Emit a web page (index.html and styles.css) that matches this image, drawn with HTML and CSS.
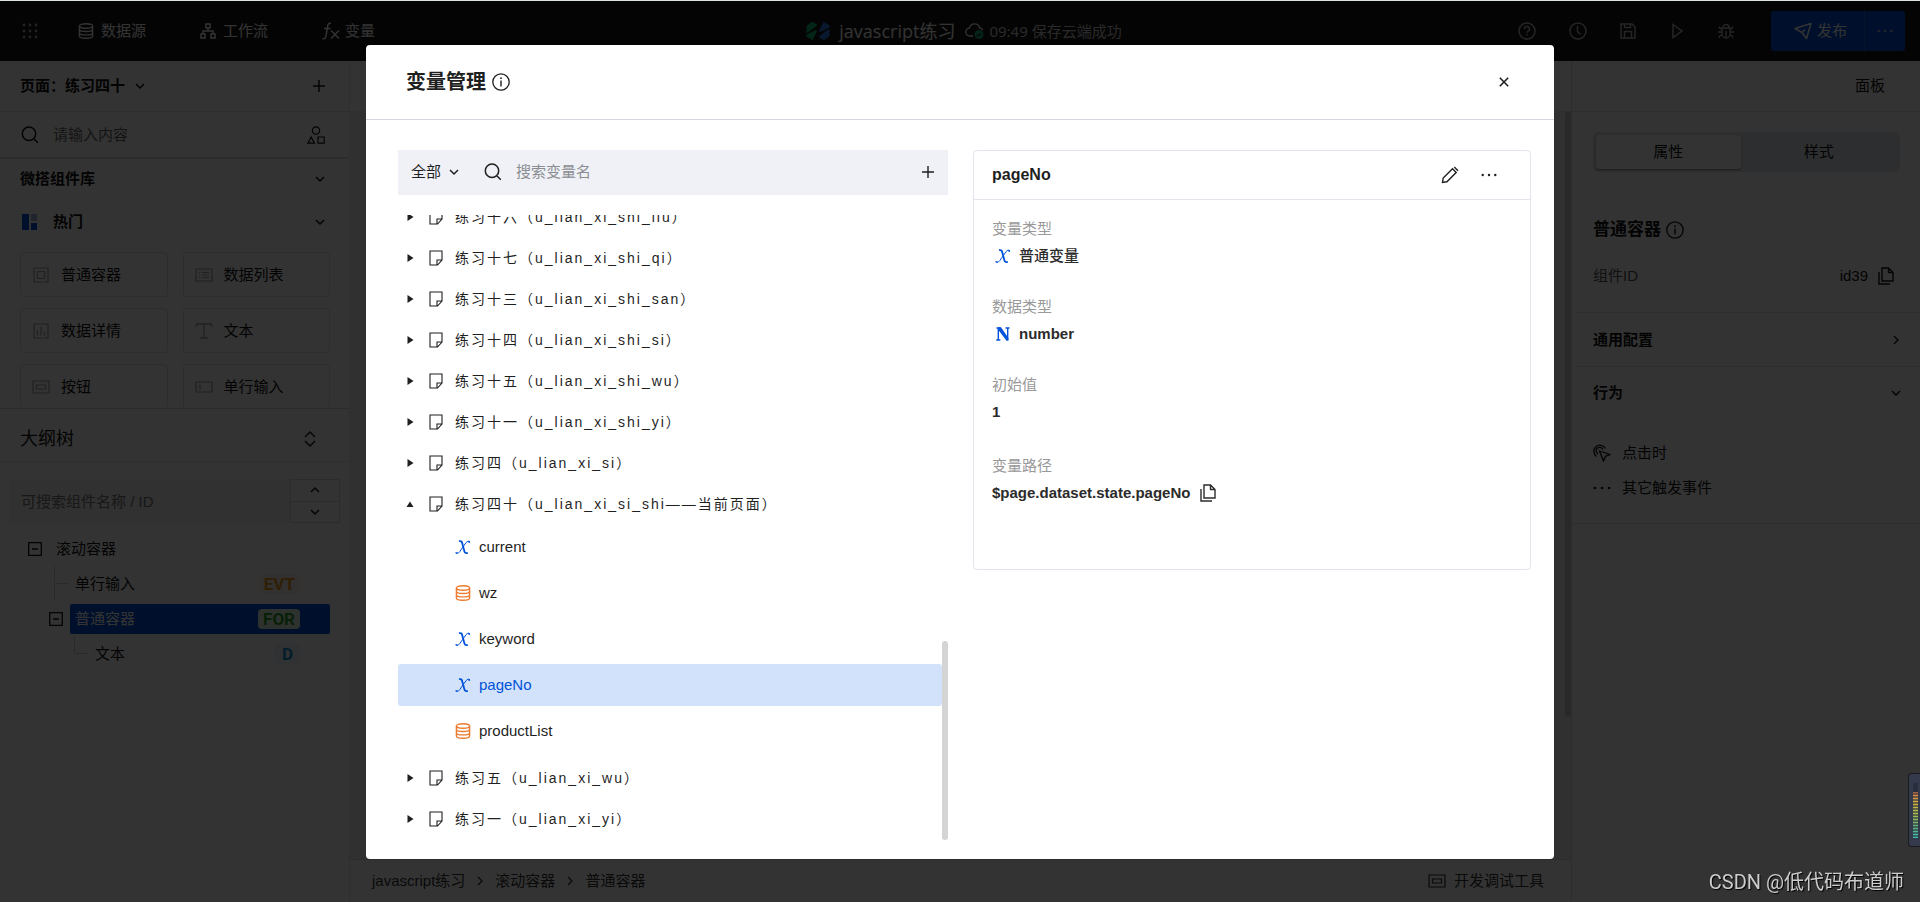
FILE: index.html
```html
<!DOCTYPE html>
<html lang="zh-CN">
<head>
<meta charset="utf-8">
<title>javascript练习 - 变量管理</title>
<link rel="stylesheet" href="styles.css">
</head>
<body>
<svg class="sprite" aria-hidden="true">
  <symbol id="i-grid" viewBox="0 0 16 16"><g fill="currentColor"><circle cx="2" cy="2" r="1.4"/><circle cx="8" cy="2" r="1.4"/><circle cx="14" cy="2" r="1.4"/><circle cx="2" cy="8" r="1.4"/><circle cx="8" cy="8" r="1.4"/><circle cx="14" cy="8" r="1.4"/><circle cx="2" cy="14" r="1.4"/><circle cx="8" cy="14" r="1.4"/><circle cx="14" cy="14" r="1.4"/></g></symbol>
  <symbol id="i-db" viewBox="0 0 16 16"><g fill="none" stroke="currentColor" stroke-width="1.4"><ellipse cx="8" cy="3" rx="6.6" ry="2.2"/><path d="M1.4 3v10c0 1.2 3 2.2 6.600 2.200s6.600-1 6.600-2.200V3M1.400 6.300c0 1.200 3 2.200 6.600 2.200s6.600-1 6.600-2.200M1.400 9.700c0 1.200 3 2.200 6.600 2.200s6.600-1 6.600-2.200"/></g></symbol>
  <symbol id="i-flow" viewBox="0 0 16 16"><g fill="none" stroke="currentColor" stroke-width="1.5"><path d="M6 1h4v4H6zM1 11h4v4H1zM11 11h4v4h-4zM8 5v3M3 11V8h10v3"/></g></symbol>
  <symbol id="i-fx" viewBox="0 0 18 18"><g fill="none" stroke="currentColor" stroke-width="1.5"><path d="M9 1.500C6.500.8 5.800 2.500 5.500 5L4 14c-.3 2-1.200 3.200-3.500 2.700M2 6.500h6.500M9 8.500l8 8M17 8.500l-8 8"/></g></symbol>
  <symbol id="i-help" viewBox="0 0 18 18"><g fill="none" stroke="currentColor" stroke-width="1.500"><circle cx="9" cy="9" r="8"/><path d="M6.500 7a2.500 2.500 0 1 1 3.600 2.200c-.8.400-1.100.8-1.100 1.600M9 12v1.500"/></g></symbol>
  <symbol id="i-clock" viewBox="0 0 18 18"><g fill="none" stroke="currentColor" stroke-width="1.500"><circle cx="9" cy="9" r="8"/><path d="M8.500 4v5.500l3 3"/></g></symbol>
  <symbol id="i-save" viewBox="0 0 16 16"><g fill="none" stroke="currentColor" stroke-width="1.500"><path d="M1 1h11l3 3v11H1zM4.500 1v3.500h6V1M4.500 15V8.500h7V15"/></g></symbol>
  <symbol id="i-play" viewBox="0 0 16 16"><path d="M4 1.500l9 6.500-9 6.500z" fill="none" stroke="currentColor" stroke-width="1.500"/></symbol>
  <symbol id="i-bug" viewBox="0 0 16 16"><g fill="none" stroke="currentColor" stroke-width="1.300"><path d="M5 4.500a3 3 0 0 1 6 0M4 5h8v6a4 4 0 0 1-8 0zM8 8v7M0 9h4M12 9h4M1 3.500c.3 1.500 1.200 2.500 3 2.500M15 3.500c-.3 1.500-1.200 2.500-3 2.500M1 15c.3-1.800 1.200-2.800 3-2.800M15 15c-.3-1.800-1.200-2.800-3-2.800"/></g></symbol>
  <symbol id="i-send" viewBox="0 0 18 18"><path d="M1 6.500L17 1.500 12.500 16.500 8 10.500zM8 10.500l3-3" fill="none" stroke="currentColor" stroke-width="1.500" stroke-linejoin="round"/></symbol>
  <symbol id="i-dots" viewBox="0 0 16 16"><g fill="currentColor"><circle cx="1.700" cy="8" r="1.200"/><circle cx="8" cy="8" r="1.200"/><circle cx="14.300" cy="8" r="1.200"/></g></symbol>
  <symbol id="i-down" viewBox="0 0 10 10"><path d="M1 3l4 4 4-4" fill="none" stroke="currentColor" stroke-width="1.500"/></symbol>
  <symbol id="i-up" viewBox="0 0 10 10"><path d="M1 7l4-4 4 4" fill="none" stroke="currentColor" stroke-width="1.500"/></symbol>
  <symbol id="i-right" viewBox="0 0 10 10"><path d="M3 1l4 4-4 4" fill="none" stroke="currentColor" stroke-width="1.300"/></symbol>
  <symbol id="i-updown" viewBox="0 0 12 16"><path d="M1 6l5-5 5 5M1 10l5 5 5-5" fill="none" stroke="currentColor" stroke-width="1.400"/></symbol>
  <symbol id="i-plus" viewBox="0 0 12 12"><path d="M6 0v12M0 6h12" fill="none" stroke="currentColor" stroke-width="1.400"/></symbol>
  <symbol id="i-search" viewBox="0 0 18 18"><path d="M8 1a6.700 6.700 0 1 0 0 13.400A6.700 6.700 0 0 0 8 1zM12.800 12.800l4 4" fill="none" stroke="currentColor" stroke-width="1.500"/></symbol>
  <symbol id="i-shapes" viewBox="0 0 18 18"><g fill="none" stroke="currentColor" stroke-width="1.200"><circle cx="9" cy="4.500" r="3.700"/><path d="M4.200 11L.9 17.200h6.600zM11 11h6.200v6.200H11z"/></g></symbol>
  <symbol id="i-box" viewBox="0 0 18 16"><path d="M2 1h14v14H2zM5.500 4.500h7v7h-7z" fill="none" stroke="currentColor" stroke-width="1.200"/></symbol>
  <symbol id="i-list" viewBox="0 0 18 16"><path d="M1 2h16v12H1zM4 5.500h1.500M7 5.500h7M4 8h1.500M7 8h7M4 10.500h1.500M7 10.500h7" fill="none" stroke="currentColor" stroke-width="1.200"/></symbol>
  <symbol id="i-chart" viewBox="0 0 18 16"><path d="M2 1h14v14H2zM5.500 7v5.500M9 4v8.500M12.500 9v3.500" fill="none" stroke="currentColor" stroke-width="1.200"/></symbol>
  <symbol id="i-t" viewBox="0 0 18 16"><path d="M1.500 4V1h15v3M9 1v14M5 15h8" fill="none" stroke="currentColor" stroke-width="1.300"/></symbol>
  <symbol id="i-btn" viewBox="0 0 18 16"><path d="M1 2h16v12H1zM4.500 6h9v4h-9z" fill="none" stroke="currentColor" stroke-width="1.200"/></symbol>
  <symbol id="i-input" viewBox="0 0 18 16"><path d="M1 3h16v10H1zM5 5.500v5" fill="none" stroke="currentColor" stroke-width="1.200"/></symbol>
  <symbol id="i-minus" viewBox="0 0 14 14"><path d="M.7.7h12.600v12.600H.7zM4 7h6" fill="none" stroke="currentColor" stroke-width="1.300"/></symbol>
  <symbol id="i-info" viewBox="0 0 18 18"><circle cx="9" cy="9" r="8.200" fill="none" stroke="currentColor" stroke-width="1.300"/><path d="M9 7.500v6" stroke="currentColor" stroke-width="1.400"/><circle cx="9" cy="5.200" r=".9" fill="currentColor"/></symbol>
  <symbol id="i-copy" viewBox="0 0 16 18"><g fill="none" stroke="currentColor" stroke-width="1.400"><path d="M4 1h6.500L15 5.500V14H4zM10.500 1v4.500H15"/><path d="M1 5v12h11"/></g></symbol>
  <symbol id="i-click" viewBox="0 0 18 18"><g fill="none" stroke="currentColor" stroke-width="1.300"><path d="M6.500 7l10.500 3.500-4.500 1.800-2 4.700zM3.500 12.500A6.200 6.200 0 1 1 12.500 4.500M5 10A3.500 3.500 0 1 1 9.800 5.500"/></g></symbol>
  <symbol id="i-close" viewBox="0 0 10 10"><path d="M.8.8l8.400 8.400M9.200.8L.8 9.200" stroke="currentColor" stroke-width="1.600"/></symbol>
  <symbol id="i-page" viewBox="0 0 14 16"><path d="M1 1h12v9l-4.500 5H1zM8 14.500V10h5" fill="none" stroke="currentColor" stroke-width="1.100"/></symbol>
  <symbol id="i-tri" viewBox="0 0 8 8"><path d="M1.500 0l6 4-6 4z" fill="currentColor"/></symbol>
  <symbol id="i-triup" viewBox="0 0 8 8"><path d="M.5 7h7L4 1.500z" fill="currentColor"/></symbol>
  <symbol id="i-x" viewBox="0 0 16 16"><g fill="none" stroke="currentColor"><path d="M4 2.200c2.500-.5 2.800.3 3.500 3l1.600 6c.5 2.300 1 3.300 3.700 2.700" stroke-width="1.800"/><path d="M14.800 3.300c-.5-1.700-2.300-1.500-3.700.3L4.700 12.700C3.300 14.700 1.600 14.700 1 13.500" stroke-width="1"/><path d="M13.400 2.900h1.600M.7 14h1.800" stroke-width="1.600"/></g></symbol>
  <symbol id="i-n" viewBox="0 0 16 16"><path d="M1.500 2h4M3.300 2v12M1.300 14h4M12.700 2v12M10.500 2h4" fill="none" stroke="currentColor" stroke-width="1.400"/><path d="M3 1.300h3L13.400 12v2.700h-1.800L3 3.500z" fill="currentColor"/></symbol>
  <symbol id="i-pencil" viewBox="0 0 18 18"><path d="M1.500 16.500l.7-4.500L11.500 2.700l3.700 3.700-9.300 9.400zM13.300 1l3.700 3.700" fill="none" stroke="currentColor" stroke-width="1.400"/></symbol>
  <symbol id="i-logo" viewBox="0 0 24 20"><path d="M.5 5L6 .8 11 3.500v1L4 10 .5 12zM.5 13.500L10 9l1 1-4.500 9.200L.5 15.500z" fill="#12b870"/><path d="M23.500 15L18 19.200 13 16.500v-1L20 10l3.500-2zM23.500 6.500L14 11l-1-1L17.500.8l6 3.700z" fill="#2c7be8"/></symbol>
  <symbol id="i-cloud" viewBox="0 0 20 18"><path d="M8 14H5a4 4 0 0 1-.5-8 5.200 5.200 0 0 1 10.200 0 3.500 3.500 0 0 1 3 2" fill="none" stroke="currentColor" stroke-width="1.300"/><circle cx="14" cy="12.500" r="4.500" fill="#14b37d"/><path d="M12 12.500l1.500 1.500 2.600-2.700" fill="none" stroke="#222" stroke-width="1.200"/></symbol>
</svg>

<div class="app">
  <header class="topbar">
    <nav class="topnav">
      <button class="icon-btn" aria-label="应用"><svg class="ic16"><use href="#i-grid"/></svg></button>
      <button class="nav-btn nav-data"><svg class="ic16"><use href="#i-db"/></svg>数据源</button>
      <button class="nav-btn nav-flow"><svg class="ic16"><use href="#i-flow"/></svg>工作流</button>
      <button class="nav-btn nav-var"><svg class="ic18"><use href="#i-fx"/></svg>变量</button>
    </nav>
    <div class="project">
      <svg class="logo"><use href="#i-logo"/></svg>
      <span class="project-name">javascript练习</span>
      <svg class="ic20"><use href="#i-cloud"/></svg>
      <span class="save-state">09:49 保存云端成功</span>
    </div>
    <div class="tools">
      <button class="icon-btn" aria-label="帮助"><svg class="ic18"><use href="#i-help"/></svg></button>
      <button class="icon-btn" aria-label="历史"><svg class="ic18"><use href="#i-clock"/></svg></button>
      <button class="icon-btn" aria-label="保存"><svg class="ic16"><use href="#i-save"/></svg></button>
      <button class="icon-btn" aria-label="预览"><svg class="ic16"><use href="#i-play"/></svg></button>
      <button class="icon-btn" aria-label="调试"><svg class="ic16"><use href="#i-bug"/></svg></button>
      <div class="publish">
        <button class="publish-main"><svg class="ic18"><use href="#i-send"/></svg>发布</button>
        <button class="publish-more" aria-label="更多发布选项"><svg class="ic16"><use href="#i-dots"/></svg></button>
      </div>
    </div>
  </header>

  <div class="workspace">
    <aside class="left">
      <div class="page-bar">
        <button class="page-pick">页面：练习四十<svg class="ic10"><use href="#i-down"/></svg></button>
        <button class="icon-btn" aria-label="新建页面"><svg class="ic12"><use href="#i-plus"/></svg></button>
      </div>
      <div class="comp-search">
        <svg class="ic18"><use href="#i-search"/></svg>
        <input type="text" placeholder="请输入内容" aria-label="搜索组件">
        <svg class="ic18"><use href="#i-shapes"/></svg>
      </div>
      <div class="library">
        <button class="lib-head">微搭组件库<svg class="ic10"><use href="#i-down"/></svg></button>
        <button class="lib-head hot"><span class="hot-mark"><i></i><i></i><i></i></span>热门<svg class="ic10"><use href="#i-down"/></svg></button>
        <div class="comps">
          <button class="comp"><svg class="ic18"><use href="#i-box"/></svg>普通容器</button>
          <button class="comp"><svg class="ic18"><use href="#i-list"/></svg>数据列表</button>
          <button class="comp"><svg class="ic18"><use href="#i-chart"/></svg>数据详情</button>
          <button class="comp"><svg class="ic18"><use href="#i-t"/></svg>文本</button>
          <button class="comp"><svg class="ic18"><use href="#i-btn"/></svg>按钮</button>
          <button class="comp"><svg class="ic18"><use href="#i-input"/></svg>单行输入</button>
        </div>
      </div>
      <div class="outline-head">大纲树<svg class="ic-ud"><use href="#i-updown"/></svg></div>
      <div class="outline-search">
        <input type="text" placeholder="可搜索组件名称 / ID" aria-label="搜索大纲">
        <div class="steps">
          <button aria-label="上一个"><svg class="ic10"><use href="#i-up"/></svg></button>
          <button aria-label="下一个"><svg class="ic10"><use href="#i-down"/></svg></button>
        </div>
      </div>
      <ul class="outline">
        <li class="node lv1"><svg class="ic14"><use href="#i-minus"/></svg><div class="node-body">滚动容器</div></li>
        <li class="node lv2 leaf"><span class="branch tee"><i></i></span><div class="node-body">单行输入<b class="badge evt">EVT</b></div></li>
        <li class="node lv2 selected"><svg class="ic14"><use href="#i-minus"/></svg><div class="node-body">普通容器<b class="badge for">FOR</b></div></li>
        <li class="node lv3 leaf"><span class="branch"><i></i></span><div class="node-body">文本<b class="badge d">D</b></div></li>
      </ul>
    </aside>

    <main class="center">
      <div class="center-bar"></div>
      <div class="canvas"><span class="canvas-scroll"></span></div>
      <footer class="status">
        <nav class="crumbs"><a href="#">javascript练习</a><svg class="ic10"><use href="#i-right"/></svg><a href="#">滚动容器</a><svg class="ic10"><use href="#i-right"/></svg><a href="#">普通容器</a></nav>
        <button class="devtool"><svg class="ic18"><use href="#i-btn"/></svg>开发调试工具</button>
      </footer>
    </main>

    <aside class="right">
      <div class="right-bar">面板</div>
      <div class="tabs"><button class="tab on">属性</button><button class="tab">样式</button></div>
      <section class="ident">
        <h2>普通容器<svg class="ic18"><use href="#i-info"/></svg></h2>
        <div class="id-row"><span class="id-label">组件ID</span><span class="id-value">id39</span><svg class="ic-copy"><use href="#i-copy"/></svg></div>
      </section>
      <button class="fold">通用配置<svg class="ic10"><use href="#i-right"/></svg></button>
      <button class="fold">行为<svg class="ic10"><use href="#i-down"/></svg></button>
      <div class="events">
        <button><svg class="ic18"><use href="#i-click"/></svg>点击时</button>
        <button><svg class="ic18"><use href="#i-dots"/></svg>其它触发事件</button>
      </div>
    </aside>
  </div>
</div>

<div class="mask">
  <div class="dialog" role="dialog" aria-labelledby="dlg-title">
    <div class="dialog-head">
      <h1 id="dlg-title">变量管理</h1>
      <svg class="ic18"><use href="#i-info"/></svg>
      <button class="close" aria-label="关闭"><svg class="ic10"><use href="#i-close"/></svg></button>
    </div>
    <div class="dialog-body">
      <section class="vars">
        <div class="var-tools">
          <button class="scope">全部<svg class="ic10"><use href="#i-down"/></svg></button>
          <svg class="ic18"><use href="#i-search"/></svg>
          <input type="text" placeholder="搜索变量名" aria-label="搜索变量名">
          <button class="icon-btn" aria-label="新建变量"><svg class="ic12"><use href="#i-plus"/></svg></button>
        </div>
        <div class="tree-wrap">
          <ul class="tree">
            <li class="group"><svg class="ic8"><use href="#i-tri"/></svg><svg class="ic-page"><use href="#i-page"/></svg><span>练习十六（u_lian_xi_shi_liu）</span></li>
            <li class="group"><svg class="ic8"><use href="#i-tri"/></svg><svg class="ic-page"><use href="#i-page"/></svg><span>练习十七（u_lian_xi_shi_qi）</span></li>
            <li class="group"><svg class="ic8"><use href="#i-tri"/></svg><svg class="ic-page"><use href="#i-page"/></svg><span>练习十三（u_lian_xi_shi_san）</span></li>
            <li class="group"><svg class="ic8"><use href="#i-tri"/></svg><svg class="ic-page"><use href="#i-page"/></svg><span>练习十四（u_lian_xi_shi_si）</span></li>
            <li class="group"><svg class="ic8"><use href="#i-tri"/></svg><svg class="ic-page"><use href="#i-page"/></svg><span>练习十五（u_lian_xi_shi_wu）</span></li>
            <li class="group"><svg class="ic8"><use href="#i-tri"/></svg><svg class="ic-page"><use href="#i-page"/></svg><span>练习十一（u_lian_xi_shi_yi）</span></li>
            <li class="group"><svg class="ic8"><use href="#i-tri"/></svg><svg class="ic-page"><use href="#i-page"/></svg><span>练习四（u_lian_xi_si）</span></li>
            <li class="group"><svg class="ic8"><use href="#i-triup"/></svg><svg class="ic-page"><use href="#i-page"/></svg><span>练习四十（u_lian_xi_si_shi——当前页面）</span></li>
            <li class="children">
              <ul>
                <li class="var"><svg class="ic16 blue"><use href="#i-x"/></svg>current</li>
                <li class="var"><svg class="ic16 orange"><use href="#i-db"/></svg>wz</li>
                <li class="var"><svg class="ic16 blue"><use href="#i-x"/></svg>keyword</li>
                <li class="var active"><svg class="ic16 blue"><use href="#i-x"/></svg>pageNo</li>
                <li class="var"><svg class="ic16 orange"><use href="#i-db"/></svg>productList</li>
              </ul>
            </li>
            <li class="group"><svg class="ic8"><use href="#i-tri"/></svg><svg class="ic-page"><use href="#i-page"/></svg><span>练习五（u_lian_xi_wu）</span></li>
            <li class="group"><svg class="ic8"><use href="#i-tri"/></svg><svg class="ic-page"><use href="#i-page"/></svg><span>练习一（u_lian_xi_yi）</span></li>
          </ul>
          <span class="tree-scroll"></span>
        </div>
      </section>
      <section class="detail">
        <div class="detail-head">
          <h2>pageNo</h2>
          <button class="icon-btn" aria-label="编辑"><svg class="ic18"><use href="#i-pencil"/></svg></button>
          <button class="icon-btn" aria-label="更多"><svg class="ic16"><use href="#i-dots"/></svg></button>
        </div>
        <dl>
          <dt>变量类型</dt><dd class="medium"><svg class="ic16 blue"><use href="#i-x"/></svg>普通变量</dd>
          <dt>数据类型</dt><dd><svg class="ic16 blue"><use href="#i-n"/></svg>number</dd>
          <dt>初始值</dt><dd class="init">1</dd>
          <dt>变量路径</dt><dd class="path">$page.dataset.state.pageNo<svg class="ic-copy"><use href="#i-copy"/></svg></dd>
        </dl>
      </section>
    </div>
  </div>
</div>

<div class="meter"><span></span></div>
<div class="credit">CSDN @低代码布道师</div>
</body>
</html>
```

FILE: styles.css
```css
* { box-sizing: border-box; }
body {
  margin: 0;
  font-family: "Liberation Sans", "Noto Sans CJK SC", sans-serif;
  font-size: 15px;
  line-height: 20px;
  color: #111;
}
button, input { font: inherit; color: inherit; background: none; border: 0; padding: 0; margin: 0; }
button { display: flex; align-items: center; }
input { outline: 0; min-width: 0; }
ul, dl, dd, h1, h2 { margin: 0; padding: 0; list-style: none; }
a { color: inherit; text-decoration: none; }
svg { flex: none; display: block; }
.sprite { position: absolute; width: 0; height: 0; }
.ic8 { width: 8px; height: 8px; }
.ic10 { width: 10px; height: 10px; }
.ic12 { width: 12px; height: 12px; }
.ic14 { width: 14px; height: 14px; }
.ic16 { width: 16px; height: 16px; }
.ic18 { width: 18px; height: 18px; }
.ic20 { width: 20px; height: 18px; }
.ic-ud { width: 12px; height: 16px; }
.ic-copy { width: 16px; height: 18px; }
.ic-page { width: 14px; height: 16px; }
.blue { color: #0052d9; }
.orange { color: #ed7b2f; }

.app { height: 100vh; display: flex; flex-direction: column; background: #fff; }

/* Top bar */
.topbar {
  height: 61px;
  flex: none;
  display: grid;
  grid-template-columns: 1fr auto 1fr;
  align-items: center;
  background: #151515;
  color: #fff;
}
.topnav { display: flex; align-items: center; padding-left: 22px; }
.topnav > .icon-btn { color: #aaa; }
.nav-btn { gap: 7px; }
.nav-data { margin-left: 40px; }
.nav-flow { margin-left: 54px; }
.nav-var { margin-left: 54px; gap: 5px; }
.project { display: flex; align-items: center; padding-left: 8px; }
.logo { width: 24px; height: 20px; }
.project-name { font-family: "Open Sans", "Noto Sans CJK SC", sans-serif; font-size: 18px; margin: 0 10px 0 9px; }
.save-state { font-family: "Noto Sans", "Noto Sans CJK SC", sans-serif; color: #ccc; margin-left: 4px; }
.tools { display: flex; align-items: center; justify-content: flex-end; gap: 33px; padding-right: 15px; }
.tools .icon-btn { color: #bbb; }
.publish { display: flex; height: 40px; margin-left: 4px; border-radius: 3px; background: #0052d9; }
.publish-main { padding: 0 17px 0 23px; gap: 5px; }
.publish-more { padding: 0 12px; border-left: 1px solid #1f68dd; color: #bbb; }

.workspace { flex: 1; min-height: 0; display: grid; grid-template-columns: 350px minmax(0, 1fr) 349px; }

/* Left column */
.left { display: flex; flex-direction: column; min-height: 0; border-right: 1px solid #e6e8ef; }
.page-bar { height: 51px; flex: none; display: flex; align-items: center; justify-content: space-between; padding: 0 24px 0 20px; border-bottom: 1px solid #dfdfdf; }
.page-pick { gap: 10px; font-weight: 600; }
.comp-search { height: 47px; flex: none; display: flex; align-items: center; padding: 0 24px 0 21px; gap: 14px; border-bottom: 2px solid #e0e0e0; }
.comp-search input { flex: 1; }
.comp-search input::placeholder { color: #666; opacity: 1; }
.library { height: 250px; flex: none; overflow: hidden; border-bottom: 1px solid #dcdcdc; }
.lib-head { width: 100%; height: 40px; padding: 0 24px 0 20px; font-weight: 600; }
.lib-head.hot { height: 45px; }
.lib-head svg { margin-left: auto; }
.hot-mark { display: grid; grid: 7px 7px / 7px 6px; gap: 2px; margin: 0 16px 0 2px; }
.hot-mark i { background: #0052d9; }
.hot-mark i:first-child { grid-row: span 2; }
.hot-mark i:nth-child(2) { background: #9fb4dd; }
.comps { display: grid; grid-template-columns: 1fr 1fr; gap: 11px 15px; padding: 8px 19px 0 20px; }
.comp { height: 45px; border: 1px solid #dddfe4; border-radius: 3px; padding-left: 11px; gap: 11px; }
.comp svg { color: #a0a3ab; }
.outline-head { height: 53px; flex: none; display: flex; align-items: center; justify-content: space-between; padding: 8px 33px 0 20px; font-size: 18px; border-bottom: 1px solid #e8e8e8; }
.outline-search { display: flex; margin: 17px 9px 0 10px; }
.outline-search input { flex: 1; height: 44px; padding: 0 11px; background: #f2f2f2; border-radius: 3px 0 0 3px; }
.outline-search input::placeholder { color: #777; opacity: 1; }
.steps { width: 50px; display: flex; flex-direction: column; border: 1px solid #dcdcdc; }
.steps button { flex: 1; justify-content: center; }
.steps button + button { border-top: 1px solid #dcdcdc; }
.outline { padding: 8px 19px 0 28px; }
.node { height: 35px; display: flex; align-items: center; gap: 7px; }
.node.lv2 { padding-left: 21px; }
.node.lv3 { padding-left: 46px; }
.node.lv2.leaf { padding-left: 26px; }
.node.leaf { gap: 0; }
.node-body { flex: 1; height: 30px; display: flex; align-items: center; justify-content: space-between; padding: 0 30px 0 5px; border-radius: 2px; }
.node.lv1 .node-body, .node.leaf .node-body { padding-left: 7px; }
.selected .node-body { background: #0052d9; color: #fff; }
.branch { width: 14px; height: 18px; align-self: flex-start; border-left: 1px solid #d0d0d0; }
.branch i { display: block; height: 18px; border-bottom: 1px solid #d0d0d0; }
.branch.tee { height: 35px; }
.badge { font: 700 17px/20px Roboto, sans-serif; border-radius: 4px; padding: 0 5px; text-align: center; }
.evt { color: #ed9a1c; background: #fbf5ee; }
.for { color: #2ba02b; background: #e6f7e6; }
.d { color: #0a90d0; background: #eff3fa; padding: 0 7px; }

/* Canvas */
.center { display: flex; flex-direction: column; background: #fff; min-width: 0; }
.center-bar { height: 50px; }
.canvas { flex: 1; display: flex; justify-content: flex-end; background: #eeeef1; border-bottom: 1px solid #dcdcdc; }
.canvas-scroll { width: 6px; height: 81%; border-radius: 3px; background: #ccc; }
.status { height: 42px; flex: none; display: flex; align-items: center; justify-content: space-between; padding: 0 27px 0 22px; color: #333; }
.crumbs { display: flex; align-items: center; gap: 10px; }
.devtool { gap: 8px; }

/* Right column */
.right { border-left: 1px solid #e0e0e0; background: #fff; }
.right-bar { height: 51px; display: flex; align-items: center; justify-content: flex-end; padding-right: 35px; border-bottom: 1px solid #dfdfdf; }
.tabs { display: grid; grid-template-columns: 148fr 160fr; height: 40px; margin: 20px 20px 0 21px; padding: 3px; border-radius: 6px; background: #e0e4e8; }
.tab { justify-content: center; border-radius: 3px; }
.tab.on { background: #fff; box-shadow: 0 1px 2px #888; }
.ident { height: 141px; padding: 48px 26px 0 21px; border-bottom: 1px solid #e8e8e8; }
.ident h2 { display: flex; align-items: center; gap: 5px; font-size: 17px; line-height: 20px; }
.id-row { display: flex; align-items: center; margin-top: 26px; }
.id-label { color: #555; margin-right: auto; }
.id-value { margin-right: 10px; }
.fold { width: 100%; height: 53px; justify-content: space-between; padding: 0 19px 0 21px; font-weight: 600; }
.fold + .fold { border-top: 1px solid #e8e8e8; }
.events { height: 105px; display: flex; flex-direction: column; gap: 15px; padding: 24px 21px 0; border-bottom: 1px solid #e0e0e0; }
.events button { gap: 11px; }

/* Dialog */
.mask { position: fixed; inset: 0; display: flex; align-items: center; justify-content: center; background: rgba(0, 0, 0, .8); border-top: 1px solid #dde3e0; }
.dialog { width: calc(100% - 80px); max-width: 1188px; height: calc(100% - 87px); display: flex; flex-direction: column; background: #fff; border-radius: 4px; color: #1f1f1f; }
.dialog-head { height: 75px; flex: none; display: flex; align-items: center; padding: 0 45px 0 40px; border-bottom: 1px solid #d5d8e4; }
.dialog-head h1 { font-size: 20px; line-height: 28px; margin-right: 6px; }
.close { margin-left: auto; }
.dialog-body { flex: 1; min-height: 0; display: grid; grid-template-columns: 550fr 558fr; gap: 25px; padding: 30px 23px 19px 32px; align-items: start; }
.vars { height: 100%; min-height: 0; display: flex; flex-direction: column; }
.var-tools { height: 45px; flex: none; display: flex; align-items: center; padding: 0 14px 0 13px; background: #eff1f6; }
.scope { gap: 8px; margin-right: 25px; }
.var-tools input { flex: 1; margin-left: 14px; }
.var-tools input::placeholder { color: #8b8d92; opacity: 1; }
.tree-wrap { flex: 1; min-height: 0; display: flex; margin-top: 20px; }
.tree { flex: 1; height: 100%; display: flex; flex-direction: column; justify-content: flex-end; overflow: hidden; }
.tree-scroll { width: 6px; height: 199px; align-self: flex-end; border-radius: 3px; background: #d4d4d4; }
.group { height: 41px; flex: none; display: flex; align-items: center; padding-left: 8px; font-size: 14px; letter-spacing: 2px; }
.group .ic-page { margin: 0 12px 0 15px; }
.children { flex: none; padding: 1px 0 2px; }
.var { height: 42px; display: flex; align-items: center; gap: 8px; margin-bottom: 4px; padding-left: 57px; border-radius: 3px; }
.var.active { background: #d2e2fb; color: #0052d9; }

.detail { border: 1px solid #e1e4eb; border-radius: 4px; }
.detail-head { height: 49px; display: flex; align-items: center; gap: 22px; padding: 0 33px 0 18px; border-bottom: 1px solid #e1e4eb; }
.detail-head h2 { font-size: 16px; line-height: 20px; margin-right: auto; }
.detail dl { padding: 16px 18px 38px; }
.detail dt { line-height: 26px; color: #999; }
.detail dd { display: flex; align-items: center; gap: 8px; height: 28px; margin-bottom: 24px; padding-left: 3px; font-weight: 600; color: #2b2b2b; }
.detail dd.medium { font-weight: 500; }
.detail dd.init { padding-left: 0; margin-bottom: 27px; }
.detail dd.path { padding-left: 0; gap: 10px; }

/* Floating items */
.meter { position: fixed; right: 0; top: 773px; width: 12px; height: 74px; padding: 9px 2px 8px 4px; border: 1px solid #1a1b22; border-right: 0; border-radius: 4px 0 0 4px; background: #343a4c; }
.meter span { display: block; height: 100%; background: repeating-linear-gradient(transparent 0 1px, rgba(40, 45, 60, .6) 1px 3px), linear-gradient(#2a2f40 0 16%, #e0804a 18%, #d0b040 35%, #a8c050 58%, #60b080 80%, #40c0b0); }
.credit { position: fixed; right: 16px; bottom: 6px; font-family: Roboto, "Noto Sans CJK SC", sans-serif; font-size: 20px; line-height: 28px; color: #ccc; text-shadow: 1px 1px 1px #000; }
```
